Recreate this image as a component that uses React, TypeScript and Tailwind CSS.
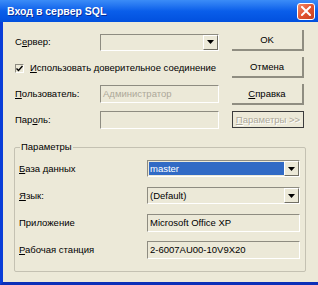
import React from "react";

const sunken = "border-t border-l border-[#8e8c81] border-b border-r border-b-white border-r-white";

function Arrow() {
  return (
    <div className="w-[15px] h-[15px] flex items-center justify-center bg-[#ECE9D8] border-t border-l border-white border-b border-r border-b-[#716F64] border-r-[#716F64]">
      <svg width="7" height="4" viewBox="0 0 7 4">
        <path d="M0 0h7L3.5 4z" fill="#000" />
      </svg>
    </div>
  );
}

function Btn({ children, className = "" }: { children: React.ReactNode; className?: string }) {
  return (
    <div
      className={`h-[21px] w-[72px] flex items-center justify-center border-b-2 border-r-2 border-b-[#8f8d81] border-r-[#8f8d81] ${className}`}
    >
      {children}
    </div>
  );
}

function Field({ children, className = "" }: { children?: React.ReactNode; className?: string }) {
  return (
    <div className={`h-[18px] flex items-center pl-[2px] ${sunken} ${className}`}>{children}</div>
  );
}

function Combo({ children, selected = false, className = "" }: { children?: React.ReactNode; selected?: boolean; className?: string }) {
  return (
    <div className={`h-[17px] flex items-stretch ${sunken} ${className}`}>
      <div className="flex-1 flex items-center pl-[1px] py-[1px]">
        <div className={`h-full w-full flex items-center pl-[1px] ${selected ? "bg-[#316AC5] text-white" : ""}`}>
          {children}
        </div>
      </div>
      <Arrow />
    </div>
  );
}

export default function App() {
  return (
    <div className="w-[318px] h-[285px] flex flex-col overflow-hidden font-['Liberation_Sans',Arial,sans-serif] text-[9.5px] leading-none text-black">
      <div className="h-[22px] shrink-0 flex items-center justify-between pl-[7px] pr-[3px] bg-linear-to-b from-[#3B8CF7] via-[#0A5EEA] to-[#0250DE]">
        <span className="text-white font-bold text-[10.5px] [text-shadow:1px_1px_0_#0A2E9A]">Вход в сервер SQL</span>
        <div className="w-[18px] h-[17px] rounded-[3px] border border-white bg-linear-to-br from-[#F08A6B] via-[#E2532F] to-[#C7401F] flex items-center justify-center">
          <svg width="10" height="10" viewBox="0 0 10 10">
            <path d="M1 1L9 9M9 1L1 9" stroke="#fff" strokeWidth="2" strokeLinecap="square" />
          </svg>
        </div>
      </div>

      <div className="flex-1 flex flex-col bg-[#ECE9D8] border-l-[3px] border-b-[3px] border-l-[#0A3ED8] border-b-[#0B2FB8]">
        <div className="flex pl-[12px]">
          <div className="flex flex-col gap-[8px] pt-[11px] w-[204px]">
            <div className="h-[18px] flex items-center">
              <span className="w-[85px]">С<u>е</u>рвер:</span>
              <Combo className="w-[119px]" />
            </div>
            <div className="h-[18px] flex items-center">
              <div className={`w-[9px] h-[9px] bg-[#ECE9D8] ${sunken} flex items-center justify-center`}>
                <svg width="7" height="7" viewBox="0 0 7 7">
                  <path d="M0.5 3.5L2.5 5.5L6.5 1" stroke="#000" strokeWidth="1.4" fill="none" />
                </svg>
              </div>
              <span className="ml-[6px] whitespace-nowrap"><u>И</u>спользовать доверительное соединение</span>
            </div>
            <div className="h-[18px] flex items-center">
              <span className="w-[85px]"><u>П</u>ользователь:</span>
              <Field className="w-[119px] text-[#ACA899]">Администратор</Field>
            </div>
            <div className="h-[18px] flex items-center">
              <span className="w-[85px]">Пар<u>о</u>ль:</span>
              <Field className="w-[119px]" />
            </div>
          </div>
          <div className="flex flex-col gap-[6px] pt-[8px] ml-[13px]">
            <Btn>OK</Btn>
            <Btn>Отмена</Btn>
            <Btn><span><u>С</u>правка</span></Btn>
            <div className="h-[17px] w-[72px] flex items-center justify-center border border-[#3c3c3c] text-[#ACA899] [text-shadow:1px_1px_0_#fff]">
              <span><u>П</u>араметры &gt;&gt;</span>
            </div>
          </div>
        </div>

        <div className="relative mt-[18px] ml-[11px] w-[292px] h-[125px] border border-[#C4C1B2] rounded-[2px] px-[4px] pt-[12px] flex flex-col gap-[10px]">
          <span className="absolute left-[5px] -top-[6px] px-[1px] bg-[#ECE9D8]">Параметры</span>
          <div className="h-[17px] flex items-center">
            <span className="w-[128px]"><u>Б</u>аза данных</span>
            <Combo selected className="w-[153px]">master</Combo>
          </div>
          <div className="h-[17px] flex items-center">
            <span className="w-[128px]"><u>Я</u>зык:</span>
            <Combo className="w-[153px]">(Default)</Combo>
          </div>
          <div className="h-[17px] flex items-center">
            <span className="w-[128px]">Приложение</span>
            <Field className="w-[153px]">Microsoft Office XP</Field>
          </div>
          <div className="h-[17px] flex items-center">
            <span className="w-[128px]"><u>Р</u>абочая станция</span>
            <Field className="w-[153px]">2-6007AU00-10V9X20</Field>
          </div>
        </div>
      </div>
    </div>
  );
}
